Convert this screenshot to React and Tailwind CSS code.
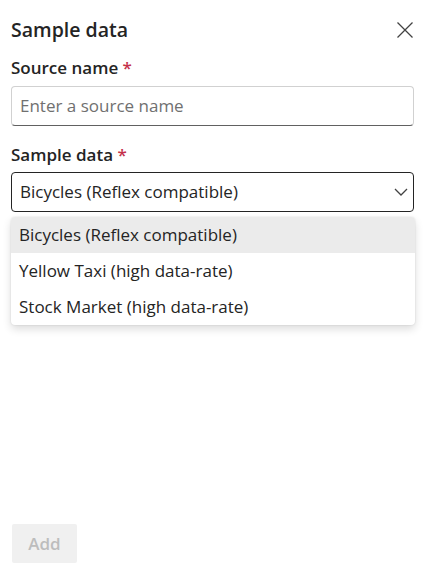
export default function App() {
  const options = [
    "Bicycles (Reflex compatible)",
    "Yellow Taxi (high data-rate)",
    "Stock Market (high data-rate)",
  ];

  return (
    <div
      className="relative flex h-[575px] w-[428px] flex-col bg-white pl-[11px] pr-[14px] text-[#242424]"
      style={{ fontFamily: "'Segoe UI', 'Open Sans', sans-serif" }}
    >
      {/* header */}
      <div className="flex items-center justify-between pt-[16px]">
        <h1 className="text-[19.5px] font-semibold leading-[28px]">Sample data</h1>
        <button className="mr-[-3px] flex h-6 w-6 items-center justify-center text-[#424242]">
          <svg width="16" height="16" viewBox="0 0 16 16" fill="none" stroke="currentColor" strokeWidth="1.25">
            <path d="M0.5 0.5L15.5 15.5M15.5 0.5L0.5 15.5" />
          </svg>
        </button>
      </div>

      {/* source name */}
      <label className="mt-[12px] text-[17px] font-semibold leading-[24px]">
        Source name <span className="text-[#c4314b]">*</span>
      </label>
      <div className="mt-[6px] flex h-[40px] items-center rounded-[4px] border border-[#d1d1d1] border-b-[#616161] px-[8px]">
        <span className="text-[17px] text-[#707070]">Enter a source name</span>
      </div>

      {/* sample data */}
      <label className="mt-[17px] text-[17px] font-semibold leading-[24px]">
        Sample data <span className="text-[#c4314b]">*</span>
      </label>
      <div className="relative mt-[5px]">
        <div className="flex h-[40px] items-center justify-between rounded-[4px] border border-[#242424] pl-[8px] pr-[5px]">
          <span className="text-[17px]">{options[0]}</span>
          <svg width="14" height="8" viewBox="0 0 14 8" fill="none" stroke="#424242" strokeWidth="1.3">
            <path d="M1 1l6 6 6-6" />
          </svg>
        </div>

        {/* listbox */}
        <div className="absolute left-0 right-[-1px] top-[45px] z-10 rounded-[4px] bg-white shadow-[0_4px_8px_rgba(0,0,0,0.14),0_0_2px_rgba(0,0,0,0.12)]">
          {options.map((o, i) => (
            <div
              key={o}
              className={
                "flex h-[36px] items-center px-[8px] text-[17px] " +
                (i === 0 ? "rounded-t-[4px] bg-[#ebebeb]" : "")
              }
            >
              {o}
            </div>
          ))}
        </div>
      </div>

      {/* footer */}
      <div className="mt-auto pb-[12px]">
        <button className="ml-[1px] h-[39px] w-[65px] rounded-[2px] bg-[#f0f0f0] text-[17px] font-semibold text-[#bdbdbd]">
          Add
        </button>
      </div>
    </div>
  );
}
